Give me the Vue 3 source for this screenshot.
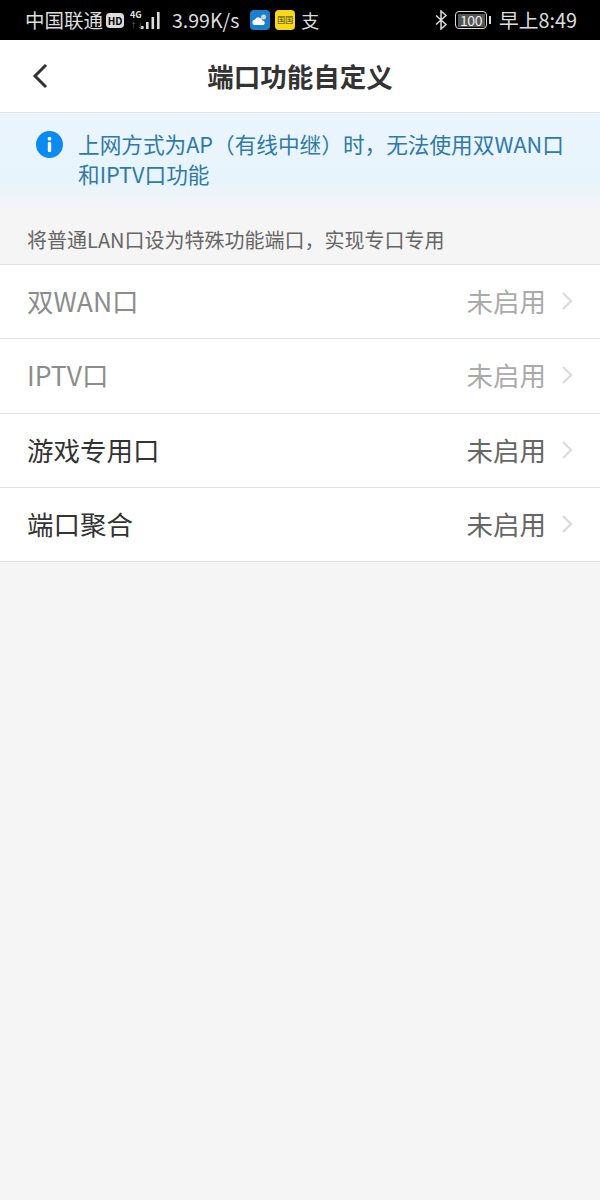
<template>
  <div class="page">
    <div class="status">
      <div class="status-left">
        <span class="carrier">中国联通</span>
        <span class="hd">HD</span>
        <span class="net">
          <span class="net-label">4G</span>
          <span class="net-arrows">↑↓</span>
          <svg width="20" height="20" viewBox="0 0 20 20">
            <rect x="1" y="16" width="2.6" height="3" fill="#ddd" />
            <rect x="6" y="12" width="2.6" height="7" fill="#ddd" />
            <rect x="11.500" y="7" width="2.6" height="12" fill="#ddd" />
            <rect x="17" y="2" width="2.6" height="17" fill="#ddd" />
          </svg>
        </span>
        <span class="speed">3.99K/s</span>
        <svg class="app" width="20" height="20" viewBox="0 0 20 20">
          <rect width="20" height="20" rx="4" fill="#1b7fd0" />
          <circle cx="13.5" cy="7" r="2.5" fill="#cfd8c0" />
          <path d="M4 15a3 3 0 0 1 1-5.600 4 4 0 0 1 7.400 1.100A2.400 2.400 0 0 1 13.500 15z" fill="#fff" />
        </svg>
        <span class="app-yellow"><i>国</i><i>国</i></span>
        <span class="zhi">支</span>
      </div>
      <div class="status-right">
        <svg width="14" height="20" viewBox="0 0 14 20" fill="none" stroke="#ddd" stroke-width="1.5">
          <path d="M2 5.500l10 9-5 4.500V1l5 4.500-10 9" />
        </svg>
        <span class="battery"><span class="level">100</span></span>
        <span class="cap"></span>
        <span class="clock">早上8:49</span>
      </div>
    </div>

    <header class="nav">
      <svg class="back" width="18" height="26" viewBox="0 0 18 26" fill="none" stroke="#333" stroke-width="3">
        <path d="M15 2L4 13l11 11" />
      </svg>
      <h1>端口功能自定义</h1>
    </header>

    <div class="notice">
      <svg class="info" width="27" height="27" viewBox="0 0 27 27">
        <circle cx="13.5" cy="13.5" r="13.5" fill="#0b8bf2" />
        <rect x="11.8" y="6" width="3.4" height="3.4" rx="1" fill="#fff" />
        <rect x="11.8" y="11" width="3.4" height="10" rx="1" fill="#fff" />
      </svg>
      <p>上网方式为AP（有线中继）时，无法使用双WAN口和IPTV口功能</p>
    </div>

    <div class="section-tip">将普通LAN口设为特殊功能端口，实现专口专用</div>

    <ul class="list">
      <li v-for="item in ports" :key="item.name" :class="{ disabled: item.disabled }">
        <span class="name">{{ item.name }}</span>
        <span class="value">未启用</span>
        <svg class="arrow" width="12" height="20" viewBox="0 0 12 20" fill="none" stroke="#dcdcdc" stroke-width="2.4">
          <path d="M2 2l8 8-8 8" />
        </svg>
      </li>
    </ul>
  </div>
</template>

<script setup>
const ports = [
  { name: '双WAN口', disabled: true },
  { name: 'IPTV口', disabled: true },
  { name: '游戏专用口', disabled: false },
  { name: '端口聚合', disabled: false },
]
</script>

<style>
html, body {
  margin: 0;
  background: #f5f5f5;
}
</style>

<style scoped>
.page {
  width: 600px;
  height: 1200px;
  overflow: hidden;
  background: #f5f5f5;
  font-family: "Noto Sans CJK SC", "Noto Sans", sans-serif;
}

.status {
  height: 40px;
  background: #000;
  color: #ddd;
  display: flex;
  justify-content: space-between;
  align-items: center;
  padding: 0 23px 0 25px;
  font-size: 19.5px;
  line-height: 24px;
}

.status-left,
.status-right {
  display: flex;
  align-items: center;
}

.hd {
  margin-left: 3px;
  width: 18px;
  height: 15px;
  border-radius: 4px;
  background: #ddd;
  color: #000;
  font-size: 10px;
  font-weight: 700;
  line-height: 15px;
  text-align: center;
}

.net {
  position: relative;
  margin-left: 6px;
  width: 30px;
  height: 20px;
  display: flex;
  justify-content: flex-end;
  align-items: flex-end;
}

.net-label {
  position: absolute;
  left: 0;
  top: 0;
  font-size: 9px;
  font-weight: 700;
  line-height: 10px;
}

.net-arrows {
  position: absolute;
  left: 0;
  top: 11px;
  font-size: 7px;
  line-height: 9px;
  color: #777;
}

.speed {
  margin-left: 12px;
}

.app {
  margin-left: 11px;
}

.app-yellow {
  margin-left: 5px;
  width: 20px;
  height: 20px;
  border-radius: 4px;
  background: #f8d81c;
  display: flex;
  justify-content: center;
  align-items: center;
  color: #4a3a10;
  font-size: 8px;
  line-height: 10px;
}

.app-yellow i {
  font-style: normal;
}

.zhi {
  margin-left: 6px;
  font-size: 18px;
}

.battery {
  margin-left: 7px;
  width: 32px;
  height: 18px;
  border: 1.5px solid #ddd;
  border-radius: 4px;
  padding: 1.5px;
  box-sizing: border-box;
  display: flex;
}

.level {
  flex: 1;
  background: #555;
  color: #eee;
  font-size: 14px;
  line-height: 12px;
  text-align: center;
  letter-spacing: -0.5px;
}

.cap {
  margin-left: 2px;
  width: 2px;
  height: 8px;
  background: #ddd;
}

.clock {
  margin-left: 8px;
  font-size: 19.8px;
}

.nav {
  height: 73px;
  box-sizing: border-box;
  background: #fff;
  border-bottom: 1px solid #e2e2e2;
  display: flex;
  align-items: center;
  justify-content: center;
  position: relative;
}

.back {
  position: absolute;
  left: 31px;
  top: 23px;
}

.nav h1 {
  margin: 0;
  font-size: 26.5px;
  font-weight: 700;
  color: #333;
  line-height: 1;
}

.notice {
  height: 96px;
  box-sizing: border-box;
  background: linear-gradient(#eaf5fd, #e8f4fc 72%, #f3f5f6);
  padding: 16px 26px 0 36px;
  display: flex;
  gap: 15px;
}

.info {
  flex: none;
  margin-top: 2px;
}

.notice p {
  margin: 0;
  color: #2f7aa8;
  font-size: 21.65px;
  line-height: 30px;
}

.section-tip {
  height: 55px;
  box-sizing: border-box;
  padding: 17px 27px 0;
  color: #666;
  font-size: 20px;
  line-height: 28px;
}

.list {
  margin: 0;
  padding: 0;
  list-style: none;
  background: #fff;
  border-top: 1px solid #e2e2e2;
}

.list li {
  height: 74.25px;
  box-sizing: border-box;
  border-bottom: 1px solid #e2e2e2;
  padding: 0 27px 1px;
  display: flex;
  align-items: center;
  font-size: 26.5px;
  line-height: 36px;
  color: #333;
}

.name {
  flex: 1;
}

.disabled .name {
  color: #8c8c8c;
}

.value {
  color: #666;
}

.disabled .value {
  color: #aaa;
}

.arrow {
  margin-left: 15px;
}
</style>
